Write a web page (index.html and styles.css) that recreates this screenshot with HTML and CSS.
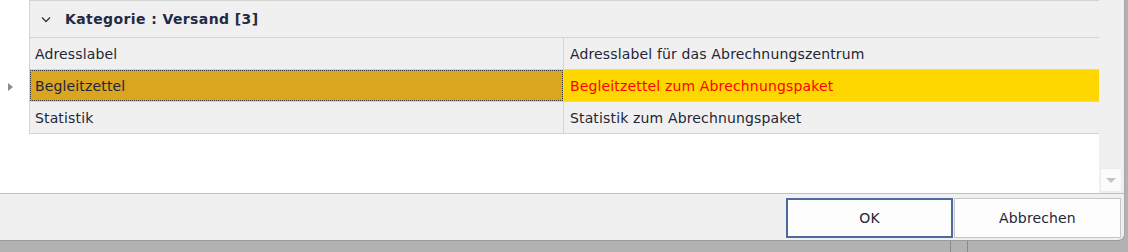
FILE: index.html
```html
<!DOCTYPE html>
<html lang="de">
<head>
<meta charset="utf-8">
<title>Kategorie</title>
<link rel="stylesheet" href="styles.css">
</head>
<body>
<div class="dialog">
  <div class="content">
    <div class="indicators">
      <div class="ind-head"></div>
      <div class="ind-row"></div>
      <div class="ind-row current"><span class="tri"></span></div>
      <div class="ind-row"></div>
    </div>
    <div class="grid">
      <div class="group-row">
        <svg class="chev" width="10" height="7" viewBox="0 0 10 7"><path d="M1 1.5 L5 5.5 L9 1.5" fill="none" stroke="#3a3a3a" stroke-width="1.4"/></svg>
        <span class="group-title">Kategorie : Versand [3]</span>
      </div>
      <div class="row">
        <div class="cell c1">Adresslabel</div>
        <div class="cell c2">Adresslabel für das Abrechnungszentrum</div>
      </div>
      <div class="row selected">
        <div class="cell c1"><span class="focus">Begleitzettel</span></div>
        <div class="cell c2">Begleitzettel zum Abrechnungspaket</div>
      </div>
      <div class="row">
        <div class="cell c1">Statistik</div>
        <div class="cell c2">Statistik zum Abrechnungspaket</div>
      </div>
    </div>
    <div class="vscroll">
      <div class="scroll-down"><span class="down-tri"></span></div>
    </div>
  </div>
  <div class="footer">
    <button class="btn btn-default">OK</button>
    <button class="btn">Abbrechen</button>
  </div>
</div>
<div class="backdrop">
  <span class="bd-line"></span>
</div>
</body>
</html>
```
FILE: styles.css
```css
html, body {
  margin: 0;
  padding: 0;
}
body {
  width: 1128px;
  height: 252px;
  overflow: hidden;
  background: #b2b2b2;
  font-family: "DejaVu Sans", Verdana, sans-serif;
  font-size: 14px;
  letter-spacing: 0.15px;
  color: #1f2737;
}
.dialog {
  width: 1124px;
  height: 240px;
  background: #f0f0f0;
  border-right: 1px solid #a8a8a8;
  border-bottom: 1px solid #9a9a9a;
  border-radius: 0 0 7px 0;
  display: flex;
  flex-direction: column;
  overflow: hidden;
}
.content {
  display: flex;
  height: 193px;
  background: #fff;
  border-bottom: 1px solid #c0c0c0;
}
.indicators {
  width: 29px;
  display: flex;
  flex-direction: column;
  padding-top: 1px;
}
.ind-head { height: 37px; }
.ind-row {
  height: 32px;
  display: flex;
  align-items: center;
  padding-left: 8px;
}
.tri {
  width: 0;
  height: 0;
  border-top: 4.5px solid transparent;
  border-bottom: 4.5px solid transparent;
  border-left: 5px solid #8c8c8c;
  margin-top: 1px;
}
.grid {
  width: 1070px;
  align-self: flex-start;
  border-top: 1px solid #d4d4d4;
  border-left: 1px solid #d4d4d4;
  background: #f0f0f0;
}
.group-row {
  height: 36px;
  border-bottom: 1px solid #d4d4d4;
  display: flex;
  align-items: center;
  padding-left: 11px;
}
.chev { margin-right: 14px; margin-top: 1px; }
.group-title {
  font-weight: bold;
  color: #1f2a45;
  font-size: 14px;
  letter-spacing: 0.4px;
}
.row {
  display: flex;
  height: 31px;
  border-bottom: 1px solid #d4d4d4;
}
.cell {
  display: flex;
  align-items: center;
  padding-left: 5px;
  white-space: nowrap;
  box-sizing: border-box;
}
.c1 {
  width: 534px;
  border-right: 1px solid #d4d4d4;
}
.c2 {
  flex: 1;
  padding-left: 6px;
}
.selected .c1 {
  background: #daa520;
  padding: 0;
}
.selected .focus {
  flex: 1;
  align-self: stretch;
  display: flex;
  align-items: center;
  padding-left: 4px;
  border: 1px dotted #3a3a3a;
}
.selected .c2 {
  background: #ffd700;
  color: #ff0000;
}
.vscroll {
  width: 25px;
  background: #f0f0f0;
  display: flex;
  flex-direction: column;
  justify-content: flex-end;
  padding-bottom: 1px;
}
.scroll-down {
  width: 22px;
  height: 24px;
  margin-left: 1px;
  background: #fbfbfb;
  border: 1px solid #ececec;
  display: flex;
  align-items: center;
  justify-content: center;
  box-sizing: border-box;
}
.down-tri {
  width: 0;
  height: 0;
  border-left: 5px solid transparent;
  border-right: 5px solid transparent;
  border-top: 5px solid #c4c4c4;
}
.footer {
  flex: 1;
  display: flex;
  justify-content: flex-end;
  align-items: flex-start;
  padding-top: 4px;
  padding-right: 3px;
  gap: 1px;
}
.btn {
  width: 167px;
  height: 40px;
  background: #fdfdfd;
  border: 1px solid #c6c6c6;
  font-family: "DejaVu Sans", Verdana, sans-serif;
  font-size: 14px;
  letter-spacing: 0.15px;
  color: #1f2737;
  padding: 0;
  box-sizing: border-box;
}
.btn-default {
  border: 2px solid #4c6b9c;
}
.backdrop {
  height: 11px;
  display: flex;
  padding-left: 950px;
}
.bd-line {
  width: 16px;
  border-left: 1px solid #8a8a8a;
  border-right: 1px solid #8a8a8a;
}
```
